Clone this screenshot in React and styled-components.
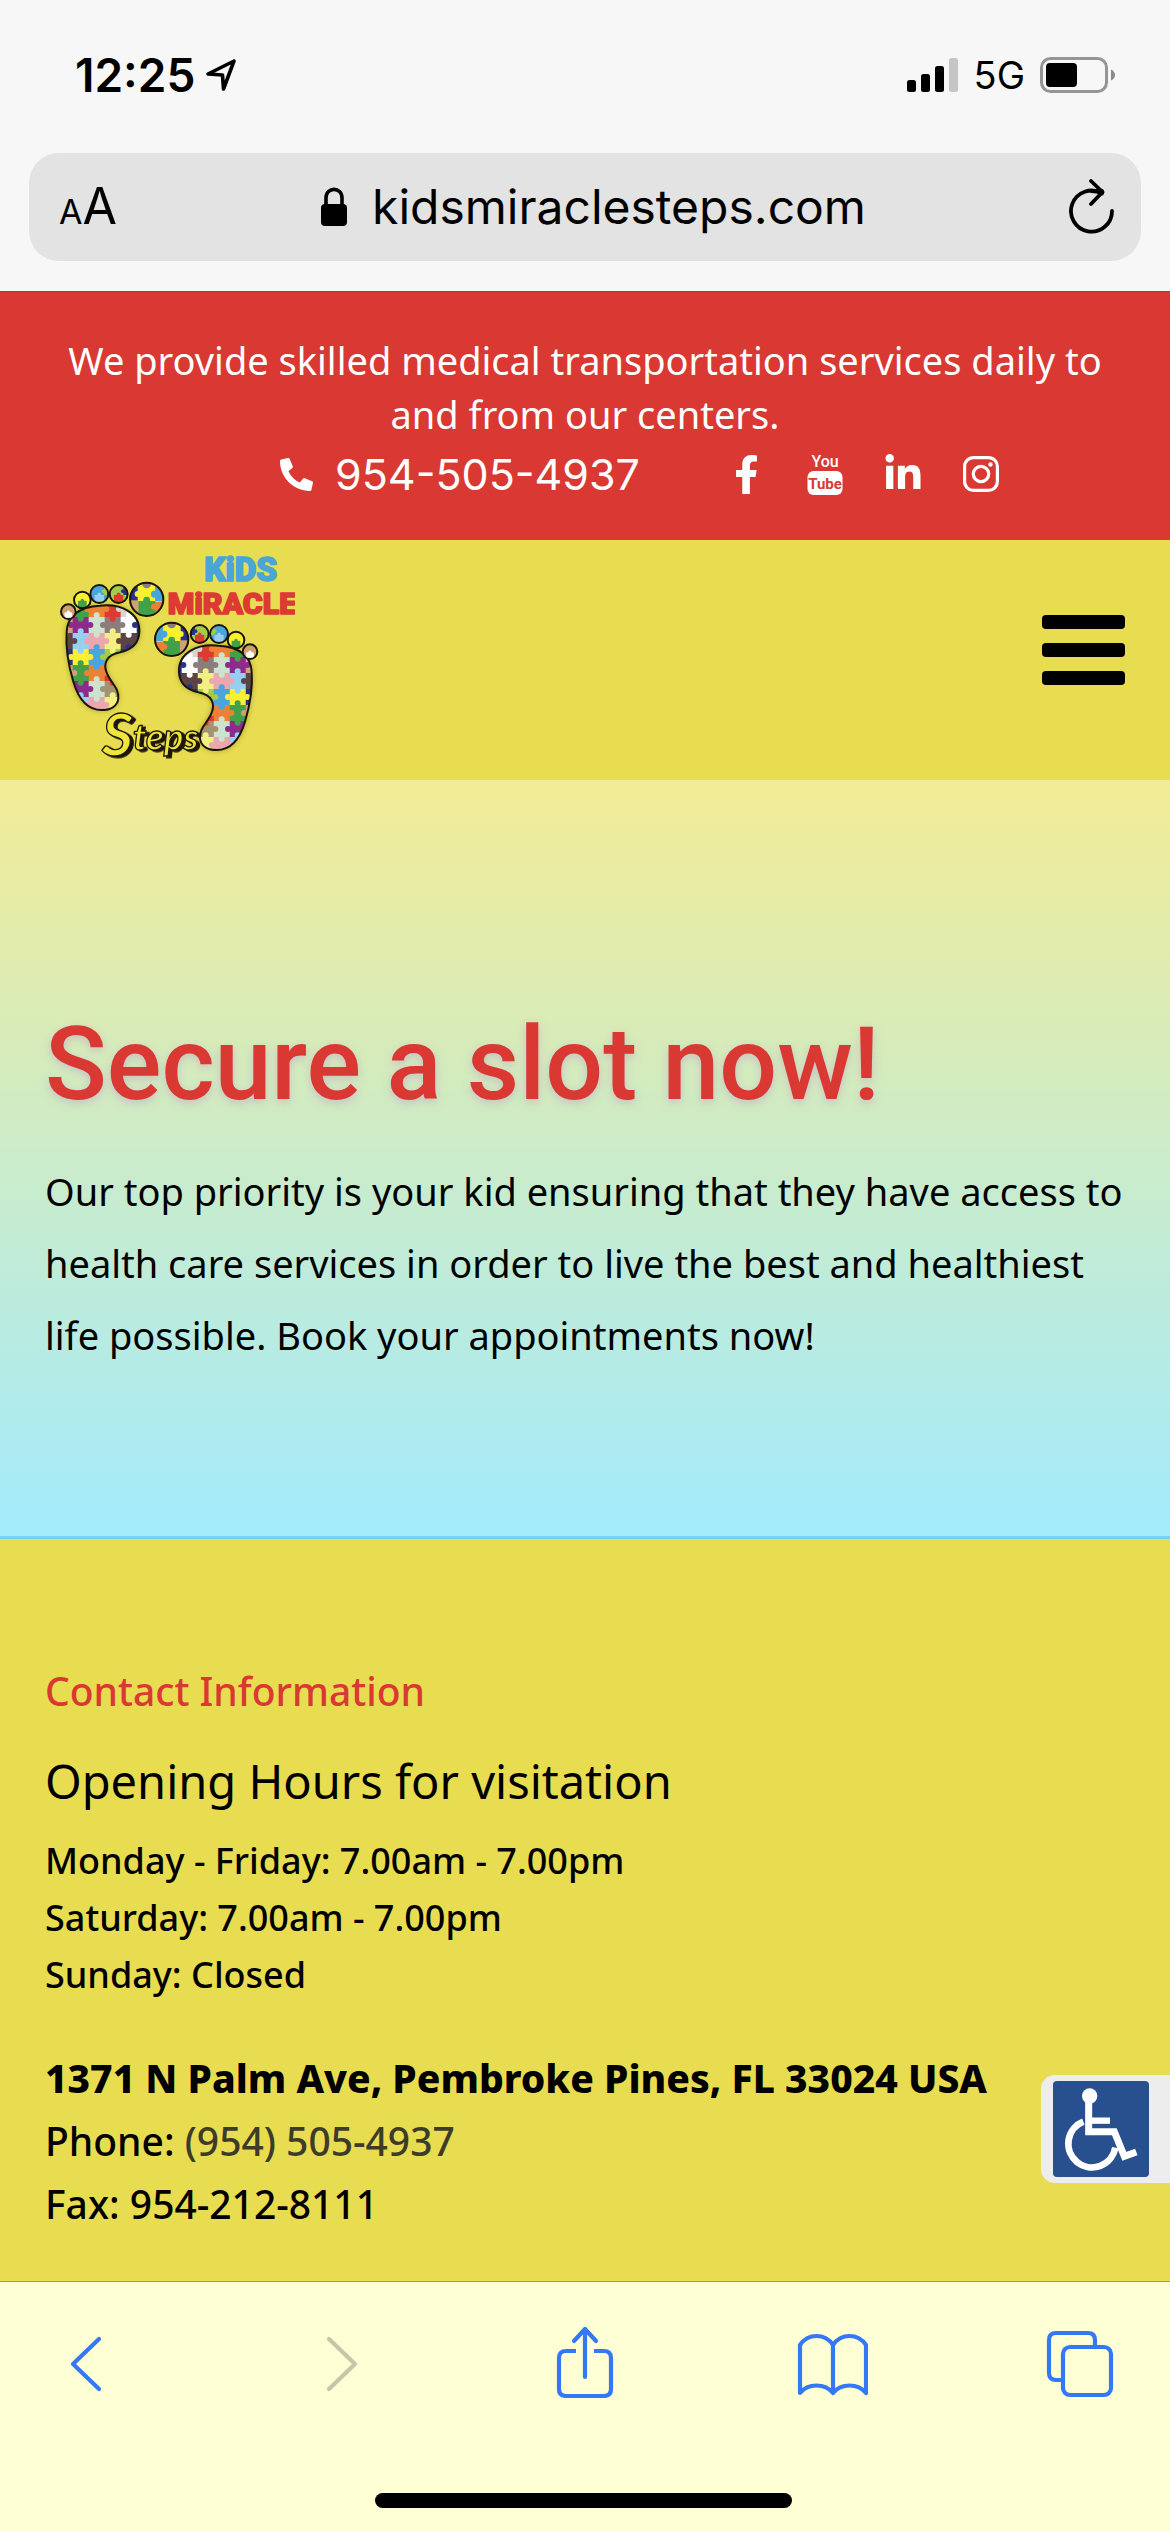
import React from 'react';
import styled, { createGlobalStyle } from 'styled-components';
import { FaPhoneAlt, FaFacebookF, FaLinkedinIn } from 'react-icons/fa';

const color = {
  red: '#d93932',
  yellow: '#e8dd50',
  blue: '#3478f6',
  cream: '#ffffd5',
};

const body = '"Noto Sans", "Open Sans", sans-serif';
const system = 'Inter, "Liberation Sans", sans-serif';

const GlobalStyle = createGlobalStyle`
  *, *::before, *::after { box-sizing: border-box; }
  body { margin: 0; background: ${color.yellow}; font-family: ${body}; color: #000; }
  h1, h2, h3, p, ul, address { margin: 0; padding: 0; font-style: normal; font-weight: 400; }
  ul { list-style: none; }
  a { color: inherit; text-decoration: none; }
  button { margin: 0; padding: 0; border: 0; background: none; color: inherit; font: inherit; cursor: pointer; }
  svg { display: block; flex: none; }
`;

const Page = styled.div`
  display: flex;
  flex-direction: column;
  min-height: 100vh;
`;

/* Browser header */

const BrowserHeader = styled.header`
  display: flex;
  flex-direction: column;
  background: #f7f7f7;
  border-bottom: 1px solid #8a4a44;
  font-family: ${system};
`;

const StatusBar = styled.div`
  display: flex;
  align-items: center;
  justify-content: space-between;
  height: 153px;
  padding: 0 55px 4px 75px;
`;

const StatusGroup = styled.div`
  display: flex;
  align-items: center;
  gap: ${(p) => p.$gap}px;
`;

const Time = styled.span`
  font-size: 46px;
  font-weight: 600;
  line-height: 54px;
`;

const Network = styled.span`
  font-size: 38px;
  line-height: 54px;
`;

const AddressBar = styled.div`
  display: flex;
  align-items: center;
  justify-content: space-between;
  height: 108px;
  margin: 0 29px 30px;
  padding: 0 26px 0 30px;
  border-radius: 30px;
  background: #e3e3e3;
`;

const TextSizeButton = styled.button`
  display: flex;
  align-items: baseline;
  padding-top: 4px;
  font-size: 50px;
  line-height: 60px;

  small { font-size: 34px; }
`;

const Site = styled.div`
  display: flex;
  align-items: center;
  gap: 24px;
  font-size: 48px;
  line-height: 60px;
`;

const PlainButton = styled.button`
  display: flex;
`;

/* Site header */

const Announcement = styled.section`
  display: flex;
  flex-direction: column;
  padding: 41px 45px 33px;
  background: ${color.red};
  color: #fff;
  text-align: center;
`;

const AnnouncementText = styled.p`
  font-size: 38px;
  line-height: 54px;
`;

const ContactLine = styled.div`
  display: flex;
  align-items: center;
  justify-content: center;
  gap: 86px;
  height: 66px;
  padding-left: 112px;
`;

const PhoneLink = styled.a`
  display: flex;
  align-items: center;
  gap: 22px;
  font-family: ${system};
  font-size: 43px;
  line-height: 54px;
`;

const SocialList = styled.ul`
  display: flex;
  align-items: center;
  gap: 36px;

  a {
    display: flex;
    align-items: center;
    justify-content: center;
    width: 42px;
    height: 44px;
  }
`;

const NavBar = styled.nav`
  display: flex;
  align-items: flex-start;
  justify-content: space-between;
  min-height: 240px;
  padding: 5px 45px 15px 55px;
  background: ${color.yellow};
`;

const MenuButton = styled.button`
  display: flex;
  flex-direction: column;
  gap: 14px;
  width: 83px;
  margin-top: 70px;

  span {
    height: 14px;
    border-radius: 4px;
    background: #000;
  }
`;

/* Hero */

const Hero = styled.section`
  display: flex;
  flex-direction: column;
  gap: 31px;
  padding: 224px 40px 165px 45px;
  border-bottom: 3px solid #6fd5f2;
  background: linear-gradient(#f3ec96, #a3ebfd) padding-box;
`;

const HeroTitle = styled.h1`
  color: ${color.red};
  font-family: Roboto, sans-serif;
  font-size: 102px;
  font-weight: 500;
  line-height: 120px;
  text-shadow: 0 3px 9px rgba(190, 150, 200, 0.5);
`;

const HeroText = styled.p`
  font-size: 38px;
  line-height: 72px;
`;

/* Footer */

const Footer = styled.footer`
  position: relative;
  flex: 1;
  padding: 122px 45px 46px;
  background: ${color.yellow};
`;

const FooterLabel = styled.h2`
  color: ${color.red};
  font-size: 39px;
  font-weight: 500;
  line-height: 60px;
`;

const FooterTitle = styled.h3`
  margin-top: 27px;
  font-size: 47px;
  line-height: 66px;
`;

const Hours = styled.ul`
  margin-top: 18px;
  font-size: 36px;
  font-weight: 500;
  line-height: 57px;
`;

const Details = styled.address`
  margin-top: 43px;
  font-size: 39px;
  font-weight: 500;
  line-height: 63px;

  strong { font-weight: 800; }
  a { color: #3c3c28; }
`;

const AccessibilityButton = styled.button`
  position: absolute;
  right: 0;
  bottom: 98px;
  display: flex;
  padding: 6px 21px 6px 12px;
  border-radius: 14px 0 0 14px;
  background: #ededed;
`;

/* Browser toolbar */

const Toolbar = styled.div`
  display: flex;
  flex-direction: column;
  align-items: center;
  gap: 95px;
  padding: 44px 54px 24px 50px;
  border-top: 1px solid #a39c4c;
  background: ${color.cream};
`;

const ToolbarButtons = styled.div`
  display: flex;
  align-self: stretch;
  justify-content: space-between;
`;

const ToolButton = styled.button`
  display: flex;
  color: ${color.blue};

  &:disabled { color: #c8c6a9; cursor: default; }
`;

const HomeIndicator = styled.div`
  width: 417px;
  max-width: 60%;
  height: 15px;
  border-radius: 8px;
  background: #000;
`;

/* Drawings */

const LocationArrow = () => (
  <svg width="32" height="34" viewBox="0 0 32 34" fill="none" stroke="#000" strokeWidth="3.6" strokeLinejoin="round" aria-hidden="true">
    <path d="M29 3 L3 16 L17.500 17 L18.500 31 Z" />
  </svg>
);

const Signal = () => (
  <svg width="52" height="34" viewBox="0 0 52 34" role="img" aria-label="Signal strength">
    <rect x="0" y="22" width="9" height="12" rx="2.500" />
    <rect x="14" y="16" width="9" height="18" rx="2.500" />
    <rect x="28" y="8" width="9" height="26" rx="2.500" />
    <rect x="42" y="0" width="9" height="34" rx="2.500" fill="#c5c5c5" />
  </svg>
);

const Battery = () => (
  <svg width="75" height="36" viewBox="0 0 75 36" role="img" aria-label="Battery">
    <rect x="1.500" y="1.500" width="65" height="33" rx="9" fill="none" stroke="#959595" strokeWidth="3" />
    <rect x="6" y="6" width="31" height="24" rx="4" />
    <path d="M71 12.500 Q75 14.500 75 18 Q75 21.500 71 23.500 Z" fill="#8a8a8a" />
  </svg>
);

const Lock = () => (
  <svg width="28" height="40" viewBox="0 0 28 40" aria-hidden="true">
    <path d="M6 20 V11 C6 -0.500 22 -0.500 22 11 V20" fill="none" stroke="#000" strokeWidth="3.600" />
    <rect x="1" y="17" width="26" height="22" rx="4" />
  </svg>
);

const Reload = () => (
  <svg width="46" height="56" viewBox="0 0 46 56" fill="none" stroke="#000" strokeWidth="3.800" strokeLinecap="round" strokeLinejoin="round" aria-hidden="true">
    <path d="M43 32 A20.500 20.500 0 1 1 33 14.500 Q28 12 22.500 12 H33" />
    <path d="M22 2 L33.500 13 L22 25" />
  </svg>
);

const YouTube = () => (
  <svg width="36" height="44" viewBox="0 0 36 44" fontFamily="Roboto, sans-serif" textAnchor="middle" aria-hidden="true">
    <text x="18" y="15" fontSize="16" fontWeight="500" fill="#fff">You</text>
    <rect x="0.500" y="19" width="35" height="24" rx="6" fill="#fff" />
    <text x="18" y="37" fontSize="15" fontWeight="700" fill={color.red}>Tube</text>
  </svg>
);

const Instagram = () => (
  <svg width="36" height="36" viewBox="0 0 36 36" fill="none" stroke="#fff" aria-hidden="true">
    <rect x="1.600" y="1.600" width="32.800" height="32.800" rx="9" strokeWidth="3.200" />
    <circle cx="18" cy="18" r="7.700" strokeWidth="3.200" />
    <circle cx="27.500" cy="8.500" r="2.200" fill="#fff" stroke="none" />
  </svg>
);

const Wheelchair = () => (
  <svg width="96" height="96" viewBox="0 0 288 288" aria-hidden="true">
    <rect width="288" height="288" rx="12" fill="#28508f" />
    <circle cx="110" cy="45" r="23" fill="#fff" />
    <g fill="none" stroke="#fff">
      <path d="M107 60 V152 H184 L214 226 L250 213" strokeWidth="21" />
      <path d="M108 119 H171" strokeWidth="19" />
      <path d="M91 122 A71 71 0 1 0 187 200" strokeWidth="20" />
    </g>
  </svg>
);

const ToolIcon = ({ children }) => (
  <svg width="72" height="72" viewBox="0 0 72 72" fill="none" stroke="currentColor" strokeWidth="4.200" strokeLinecap="round" strokeLinejoin="round" aria-hidden="true">
    {children}
  </svg>
);

const PIECE = 48;
const pieces = [
  ['#8d2b8c', '#41a048', '#ef8035', '#dd3a30', '#d9d4d0', '#ffffff'],
  ['#cfa274', '#8d2b8c', '#cde3d0', '#8b7d7c', '#ffffff', '#28328a'],
  ['#5c4344', '#96d0f0', '#eca6b0', '#f4ef83', '#5c4344', '#28328a'],
  ['#28328a', '#f9f032', '#48a5dd', '#a4cc45', '#28328a', '#28328a'],
  ['#cfa274', '#41a048', '#ea8136', '#dd3a30', '#cfa274', '#cfa274'],
  ['#8d2b8c', '#8d2b8c', '#cde3d0', '#a29372', '#a29372', '#a29372'],
  ['#96d0f0', '#96d0f0', '#eca6b0', '#f4ef83', '#f4ef83', '#f4ef83'],
];

const Puzzle = () => {
  const cells = pieces.flatMap((row, r) =>
    row.map((fill, c) => ({ fill, cx: 74 + c * PIECE, cy: 222 + r * PIECE, flat: (r + c) % 2 === 0, id: `${r}-${c}` }))
  );
  return (
    <>
      {cells.map((p) => (
        <rect key={p.id} x={p.cx - 24} y={p.cy - 24} width={PIECE + 1} height={PIECE + 1} fill={p.fill} />
      ))}
      {cells.map((p) => {
        const dx = p.flat ? 29 : 0;
        const dy = p.flat ? 0 : 29;
        return (
          <g key={p.id} fill={p.fill}>
            <circle cx={p.cx - dx} cy={p.cy - dy} r="9" />
            <circle cx={p.cx + dx} cy={p.cy + dy} r="9" />
          </g>
        );
      })}
    </>
  );
};

const toes = [
  { x: 85, y: 230, r: 23, base: '#cfa274', low: '#ffffff', side: '#cfa274' },
  { x: 127, y: 195, r: 26, base: '#f9f032', low: '#41a048', side: '#f9f032' },
  { x: 178, y: 177, r: 28, base: '#48a5dd', low: '#96d0f0', side: '#a4cc45' },
  { x: 236, y: 177, r: 28, base: '#a4cc45', low: '#dd3a30', side: '#28328a' },
  { x: 320, y: 193, r: 51, base: '#f9f032', low: '#41a048', side: '#48a5dd' },
];

const FOOT = 'M180 212 C245 205 300 235 298 290 C297 330 270 345 240 352 C200 360 186 385 203 420 C215 445 237 460 235 490 C232 515 210 525 185 525 C140 525 115 490 100 440 C85 390 77 330 80 290 C82 245 115 215 180 212 Z';

const Foot = () => (
  <>
    <path d={FOOT} fill="#000" opacity="0.350" filter="url(#soft)" />
    <g clipPath="url(#sole)"><Puzzle /></g>
    <path d={FOOT} fill="none" stroke="#1b1508" strokeWidth="6" />
    {toes.map((t, i) => (
      <g key={t.x}>
        <g clipPath={`url(#toe-${i})`}>
          <rect x={t.x - t.r} y={t.y - t.r} width={t.r * 2} height={t.r * 2} fill={t.base} />
          <rect x={t.x + t.r * 0.5} y={t.y - t.r} width={t.r} height={t.r * 1.1} fill={t.side} />
          <circle cx={t.x + t.r * 0.45} cy={t.y - t.r * 0.3} r={t.r * 0.2} fill={t.side} />
          <rect x={t.x - t.r * 0.5} y={t.y + t.r * 0.1} width={t.r} height={t.r} fill={t.low} />
          <circle cx={t.x} cy={t.y + t.r * 0.05} r={t.r * 0.2} fill={t.low} />
          {t.r > 50 && (
            <>
              <rect x="265" y="140" width="28" height="58" fill="#28328a" />
              <rect x="265" y="196" width="30" height="60" fill="#cfa274" />
              <rect x="345" y="200" width="30" height="60" fill="#ea8136" />
              <circle cx="342" cy="215" r="9" fill="#ea8136" />
              <circle cx="293" cy="177" r="9" fill="#f9f032" />
              <circle cx="320" cy="147" r="13" fill="#8b7d7c" />
            </>
          )}
        </g>
        <circle cx={t.x} cy={t.y} r={t.r - 1} fill="none" stroke="#1b1508" strokeWidth="6" />
      </g>
    ))}
  </>
);

const Logo = () => (
  <svg width="240" height="220" viewBox="45 30 720 660" role="img" aria-label="Kids Miracle Steps">
    <defs>
      <clipPath id="sole"><path d={FOOT} /></clipPath>
      {toes.map((t, i) => (
        <clipPath id={`toe-${i}`} key={t.x}><circle cx={t.x} cy={t.y} r={t.r} /></clipPath>
      ))}
      <filter id="soft" x="-20%" y="-20%" width="140%" height="140%"><feGaussianBlur stdDeviation="9" /></filter>
      <filter id="ink" x="-10%" y="-10%" width="125%" height="125%"><feDropShadow dx="9" dy="5" stdDeviation="0.5" floodColor="#1b1508" /></filter>
    </defs>
    <Foot />
    <g transform="translate(715 120) scale(-1 1)"><Foot /></g>
    <g fontFamily="Roboto, sans-serif" fontWeight="900" strokeWidth="5" strokeLinejoin="round" textAnchor="middle">
      <text x="602" y="138" fontSize="100" fill="#4aa6d6" stroke="#4aa6d6">KiDS</text>
      <text x="576" y="236" fontSize="91" fill="#dc3a33" stroke="#dc3a33">MiRACLE</text>
    </g>
    <text
      x="186" y="662" fontSize="180" fontFamily="Lato, sans-serif" fontStyle="italic" fontWeight="700"
      fill="#f0e53c" stroke="#1b1508" strokeWidth="4" filter="url(#ink)"
    >
      S<tspan fontSize="110" dy="-16">teps</tspan>
    </text>
  </svg>
);

const hours = ['Monday - Friday: 7.00am - 7.00pm', 'Saturday: 7.00am - 7.00pm', 'Sunday: Closed'];

const social = [
  { name: 'Facebook', icon: <FaFacebookF size={39} /> },
  { name: 'YouTube', icon: <YouTube /> },
  { name: 'LinkedIn', icon: <FaLinkedinIn size={40} /> },
  { name: 'Instagram', icon: <Instagram /> },
];

export default function App() {
  return (
    <Page>
      <GlobalStyle />
      <BrowserHeader>
        <StatusBar>
          <StatusGroup $gap={10}>
            <Time>12:25</Time>
            <LocationArrow />
          </StatusGroup>
          <StatusGroup $gap={15}>
            <Signal />
            <Network>5G</Network>
            <Battery />
          </StatusGroup>
        </StatusBar>
        <AddressBar>
          <TextSizeButton aria-label="Text size"><small>A</small>A</TextSizeButton>
          <Site><Lock />kidsmiraclesteps.com</Site>
          <PlainButton aria-label="Reload"><Reload /></PlainButton>
        </AddressBar>
      </BrowserHeader>

      <Announcement>
        <AnnouncementText>We provide skilled medical transportation services daily to and from our centers.</AnnouncementText>
        <ContactLine>
          <PhoneLink href="tel:9545054937"><FaPhoneAlt size={33} />954-505-4937</PhoneLink>
          <SocialList>
            {social.map((s) => (
              <li key={s.name}><a href="#" aria-label={s.name}>{s.icon}</a></li>
            ))}
          </SocialList>
        </ContactLine>
      </Announcement>

      <NavBar>
        <a href="#"><Logo /></a>
        <MenuButton aria-label="Menu"><span /><span /><span /></MenuButton>
      </NavBar>

      <Hero>
        <HeroTitle>Secure a slot now!</HeroTitle>
        <HeroText>
          Our top priority is your kid ensuring that they have access to health care services in order to live the best
          and healthiest life possible. Book your appointments now!
        </HeroText>
      </Hero>

      <Footer>
        <FooterLabel>Contact Information</FooterLabel>
        <FooterTitle>Opening Hours for visitation</FooterTitle>
        <Hours>{hours.map((h) => <li key={h}>{h}</li>)}</Hours>
        <Details>
          <strong>1371 N Palm Ave, Pembroke Pines, FL 33024 USA</strong>
          <div>Phone: <a href="tel:9545054937">(954) 505-4937</a></div>
          <div>Fax: 954-212-8111</div>
        </Details>
        <AccessibilityButton aria-label="Accessibility options"><Wheelchair /></AccessibilityButton>
      </Footer>

      <Toolbar>
        <ToolbarButtons>
          <ToolButton aria-label="Back"><ToolIcon><path d="M49 13 L23 38 L49 63" /></ToolIcon></ToolButton>
          <ToolButton aria-label="Forward" disabled><ToolIcon><path d="M30 13 L56 38 L30 63" /></ToolIcon></ToolButton>
          <ToolButton aria-label="Share">
            <ToolIcon>
              <path d="M29 25 H19 Q12 25 12 32 V63 Q12 70 19 70 H57 Q64 70 64 63 V32 Q64 25 57 25 H47" strokeLinecap="butt" />
              <path d="M38 51 V3 M27 15 L38 3 L49 15" />
            </ToolIcon>
          </ToolButton>
          <ToolButton aria-label="Bookmarks">
            <ToolIcon>
              <path d="M37 19 C29 7 12 7 4 19 V67 C12 57 29 57 37 67 C45 57 62 57 70 67 V19 C62 7 45 7 37 19 V67" />
            </ToolIcon>
          </ToolButton>
          <ToolButton aria-label="Tabs">
            <ToolIcon>
              <rect x="19" y="21" width="48" height="48" rx="7" />
              <path d="M19 54 H12 Q5 54 5 47 V14 Q5 7 12 7 H44 Q51 7 51 14 V21" />
            </ToolIcon>
          </ToolButton>
        </ToolbarButtons>
        <HomeIndicator />
      </Toolbar>
    </Page>
  );
}
